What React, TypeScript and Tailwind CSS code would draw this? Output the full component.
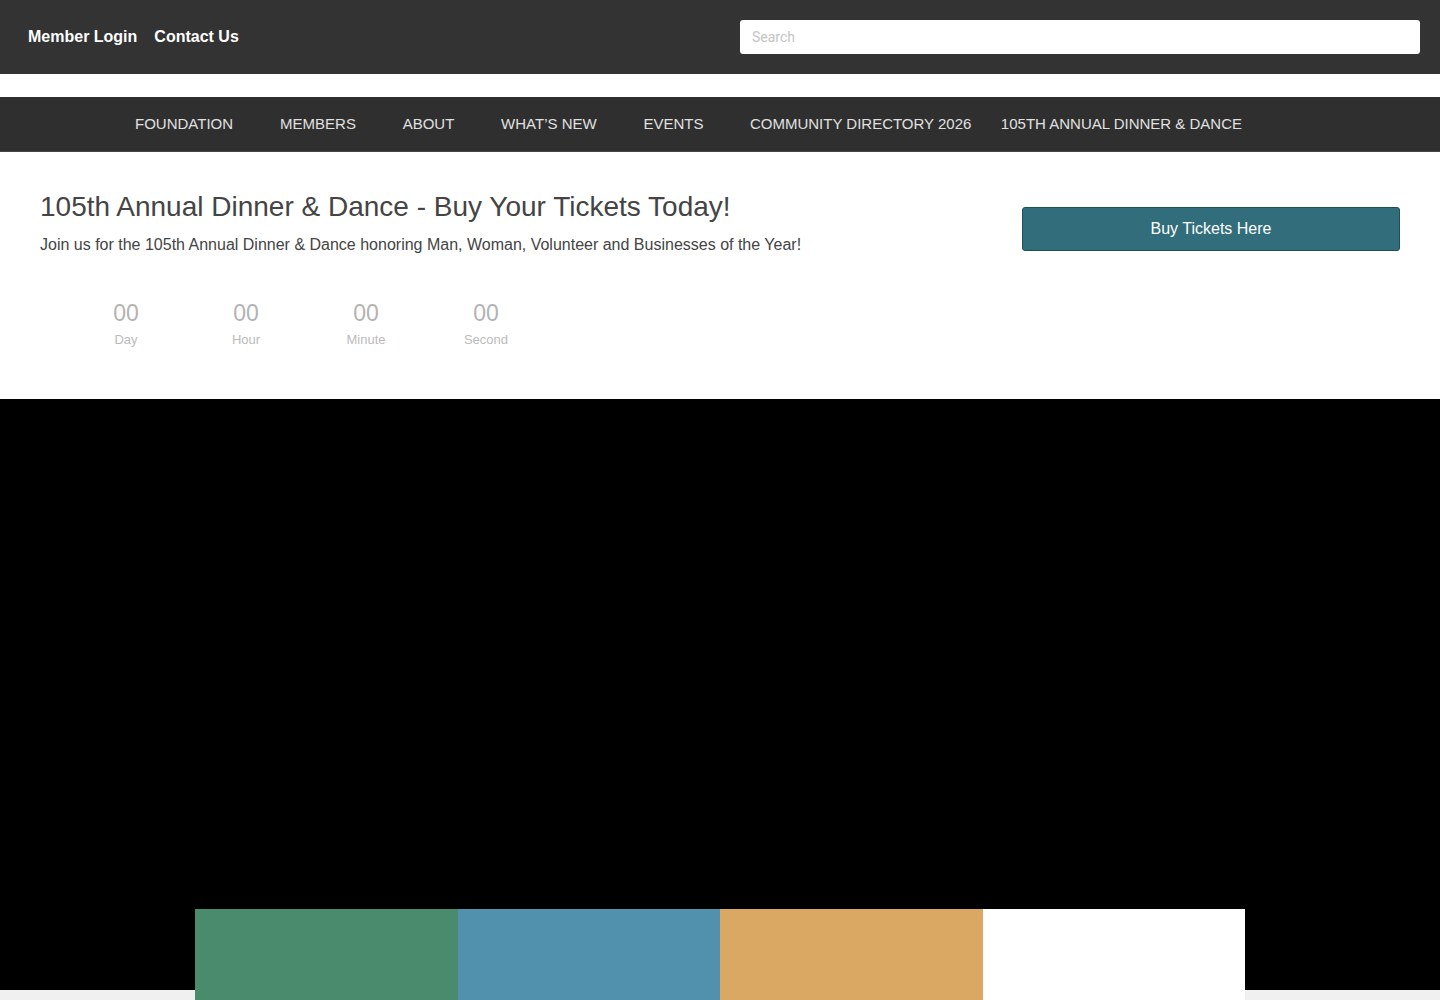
import React from 'react'

const navItems = [
  { label: 'FOUNDATION', gap: 'mr-[47px]' },
  { label: 'MEMBERS', gap: 'mr-[46.75px]' },
  { label: 'ABOUT', gap: 'mr-[46.75px]' },
  { label: 'WHAT\u2019S NEW', gap: 'mr-[46.75px]' },
  { label: 'EVENTS', gap: 'mr-[46.5px]' },
  { label: 'COMMUNITY DIRECTORY 2026', gap: 'mr-[29.5px]' },
  { label: '105TH ANNUAL DINNER & DANCE', gap: '' },
]

const countdown = ['Day', 'Hour', 'Minute', 'Second']

export default function App() {
  return (
    <div className="min-h-[1000px] bg-white font-['Liberation_Sans',Arial,sans-serif]">
      {/* top bar */}
      <header className="h-[74px] bg-[#333333] flex items-center justify-between pl-[28px] pr-[20px]">
        <div className="flex items-center gap-[17px] text-white font-bold text-[16px]">
          <a>Member Login</a>
          <a>Contact Us</a>
        </div>
        <input
          className="w-[680px] h-[34px] rounded-[3px] bg-white px-[12px] text-[14px] font-['Roboto',sans-serif] placeholder:text-[#c4c4c4] outline-none"
          placeholder="Search"
        />
      </header>

      <div className="h-[23px]" />

      {/* main nav */}
      <nav className="h-[55px] bg-[#2f2f2f] border-b border-[#474747] flex items-center pl-[135px] text-[15px] text-[#e0e0e0]">
        {navItems.map((item) => (
          <a key={item.label} className={item.gap}>
            {item.label}
          </a>
        ))}
      </nav>

      {/* event intro */}
      <section className="h-[247px] flex justify-between px-[40px]">
        <div className="pt-[38px]">
          <h1 className="text-[28px] leading-[34px] text-[#444444]">
            105th Annual Dinner &amp; Dance - Buy Your Tickets Today!
          </h1>
          <p className="mt-[9px] text-[16px] text-[#444444]">
            Join us for the 105th Annual Dinner &amp; Dance honoring Man, Woman, Volunteer and Businesses of the Year!
          </p>
          <div className="mt-[43px] ml-[26px] flex">
            {countdown.map((label) => (
              <div key={label} className="w-[120px] flex flex-col items-center">
                <span className="text-[23px] leading-[26px] text-[#b3b3b3]">00</span>
                <span className="mt-[4px] text-[13px] text-[#bbbbbb]">{label}</span>
              </div>
            ))}
          </div>
        </div>
        <div className="pt-[55px]">
          <button className="w-[378px] h-[44px] rounded-[3px] bg-[#316d7a] border border-[#1f4f59] text-white text-[16px]">
            Buy Tickets Here
          </button>
        </div>
      </section>

      {/* hero video area */}
      <section className="bg-black h-[591px] flex items-end justify-center">
        <div className="w-[1050px] grid grid-cols-4 h-[81px]">
          <div className="bg-[#4b8b6d]" />
          <div className="bg-[#5291ae]" />
          <div className="bg-[#dba863]" />
          <div className="bg-white" />
        </div>
      </section>
      <div className="bg-[#f0f0f0] h-[10px] flex justify-center">
        <div className="w-[1050px] grid grid-cols-4">
          <div className="bg-[#4b8b6d]" />
          <div className="bg-[#5291ae]" />
          <div className="bg-[#dba863]" />
          <div className="bg-white" />
        </div>
      </div>
    </div>
  )
}
